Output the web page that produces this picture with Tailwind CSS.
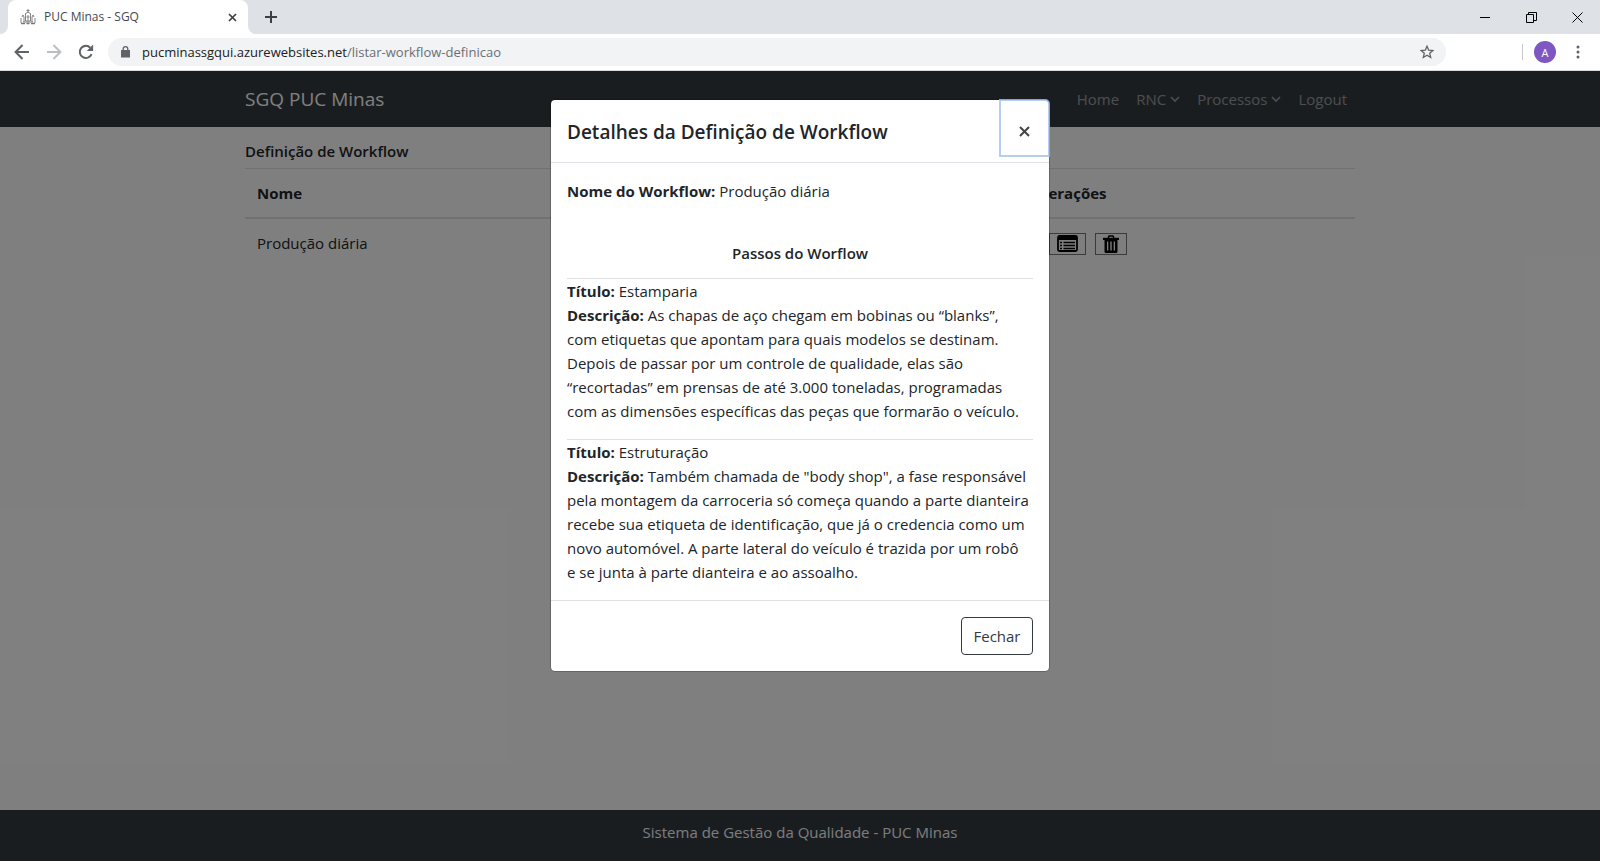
<!DOCTYPE html>
<html lang="pt-BR">
<head>
<meta charset="utf-8">
<title>PUC Minas - SGQ</title>
<script src="https://cdn.jsdelivr.net/npm/@tailwindcss/browser@4"></script>
</head>
<body class="flex h-screen flex-col overflow-hidden bg-white font-['Open_Sans','Noto_Sans',sans-serif] text-[15px] leading-6 text-[#212529]">

<!-- Browser window -->
<header class="shrink-0 border-b border-[#d5dadd] text-[13px]">
  <div class="flex h-[34px] items-center bg-[#dee1e6]">
    <div class="flex h-full w-2 bg-white"><span class="h-full w-full rounded-br-lg bg-[#dee1e6]"></span></div>
    <div class="flex h-full w-60 items-center rounded-t-lg bg-white pr-2 pl-3 text-[12px] text-[#45494d]">
      <svg class="size-4 shrink-0 text-[#777]" viewBox="0 0 16 16" fill="none" stroke="currentColor"><path d="M8 0v4M6.500 1.500h3M5 5l3-2 3 2M5.500 5v7h5V5M8 6v6M6.500 8h3M3 13h10M2 8l1-2 1 2v5M12 13V8l1-2 1 2M1 9v5M15 9v5" stroke-width=".9"/><path d="M1 14.500h4M6.500 14.500h3M11 14.500h4" stroke-width="1.500"/></svg>
      <span class="ml-2 flex-1">PUC Minas - SGQ</span>
      <button aria-label="Fechar guia" class="flex size-4 items-center justify-center text-[#3c4043]"><svg class="size-[9px]" viewBox="0 0 9 9" stroke="currentColor" stroke-width="1.700"><path d="M1 1l7 7M8 1L1 8"/></svg></button>
    </div>
    <div class="flex h-full w-2 bg-white"><span class="h-full w-full rounded-bl-lg bg-[#dee1e6]"></span></div>
    <button aria-label="Nova guia" class="ml-2 text-[#3c4043]"><svg class="size-[14px]" viewBox="0 0 14 14" stroke="currentColor" stroke-width="2"><path d="M7 1v12M1 7h12"/></svg></button>
    <div class="ml-auto flex h-7 items-center text-black">
      <button aria-label="Minimizar" class="flex w-[46px] justify-center"><svg class="size-[11px]" viewBox="0 0 11 11" stroke="currentColor"><path d="M0 5.500h10"/></svg></button>
      <button aria-label="Restaurar" class="flex w-[46px] justify-center"><svg class="size-[11px]" viewBox="0 0 11 11" fill="none" stroke="currentColor"><path d="M.5 2.500h7v8h-7zM2.500 2.500v-2h8v8h-3"/></svg></button>
      <button aria-label="Fechar janela" class="flex w-[46px] justify-center"><svg class="size-[11px]" viewBox="0 0 11 11" stroke="currentColor"><path d="M.5.5l10 10M10.500.5l-10 10"/></svg></button>
    </div>
  </div>
  <div class="flex h-9 items-center pr-4 pl-[14px] text-[#5f6368]">
    <button aria-label="Voltar" class="mr-4"><svg class="size-4" viewBox="0 0 15 15" fill="none" stroke="currentColor" stroke-width="1.900"><path d="M14 7.500H2M8 1L1.500 7.500 8 14"/></svg></button>
    <button aria-label="Avançar" class="mr-4 text-[#bcbfc2]"><svg class="size-4" viewBox="0 0 15 15" fill="none" stroke="currentColor" stroke-width="1.900"><path d="M1 7.500h12M7 1l6.500 6.500L7 14"/></svg></button>
    <button aria-label="Recarregar" class="mr-[14px]"><svg class="size-4" viewBox="0 0 15 15" fill="none"><path d="M12.700 9.500a5.700 5.700 0 1 1-1.200-6" stroke="currentColor" stroke-width="1.900"/><path d="M14.200.5v6h-6z" fill="currentColor"/></svg></button>
    <div class="flex h-7 flex-1 items-center rounded-full bg-[#f1f3f4] pr-3 pl-[13px]">
      <svg class="h-3 w-[9px]" viewBox="0 0 9 12"><path d="M0 4h9v7.500H0z" fill="currentColor"/><path d="M2.200 5V3a2.300 2.300 0 0 1 4.600 0v2" fill="none" stroke="currentColor" stroke-width="1.300"/></svg>
      <a href="#" class="ml-3 flex-1 whitespace-nowrap text-[#202124]">pucminassgqui.azurewebsites.net<span class="text-[#6b6f74]">/listar-workflow-definicao</span></a>
      <button aria-label="Favoritar"><svg class="size-[14px]" viewBox="0 0 14 14" fill="none" stroke="currentColor" stroke-width="1.300"><path d="M7 1.200l1.700 4 4.200.3-3.200 2.800 1 4.200L7 10.300l-3.700 2.200 1-4.200L1.100 5.500l4.200-.3z"/></svg></button>
    </div>
    <span class="ml-[76px] h-4 w-px bg-[#c6c9cc]"></span>
    <button class="ml-[11px] size-[22px] rounded-full bg-[#7e57c2] text-[11px] leading-none text-white">A</button>
    <button aria-label="Menu" class="ml-5 mr-1"><svg class="h-[14px] w-1" viewBox="0 0 4 14" fill="currentColor"><circle cx="2" cy="2" r="1.500"/><circle cx="2" cy="7" r="1.500"/><circle cx="2" cy="12" r="1.500"/></svg></button>
  </div>
</header>

<!-- Site -->
<div class="relative flex min-h-0 flex-1 flex-col">
  <nav class="bg-[#343a40]">
    <div class="mx-auto flex h-14 max-w-[1110px] items-center justify-between">
      <a href="#" class="text-[19px] leading-8 text-white">SGQ PUC Minas</a>
      <div class="flex gap-[17px] pr-2 text-white/50">
        <a href="#">Home</a>
        <a href="#" class="flex items-center gap-1">RNC <svg class="mt-px h-[7px] w-[10px]" viewBox="0 0 10 7" fill="none" stroke="currentColor" stroke-width="1.600"><path d="M1 1l4 4 4-4"/></svg></a>
        <a href="#" class="flex items-center gap-1">Processos <svg class="mt-px h-[7px] w-[10px]" viewBox="0 0 10 7" fill="none" stroke="currentColor" stroke-width="1.600"><path d="M1 1l4 4 4-4"/></svg></a>
        <a href="#">Logout</a>
      </div>
    </div>
  </nav>
  <main class="mx-auto w-full max-w-[1110px] flex-1 pt-3">
    <h1 class="pb-[5px] font-semibold">Definição de Workflow</h1>
    <table class="w-full border-t border-[#dee2e6] text-left">
      <thead><tr class="border-b-2 border-[#dee2e6]"><th class="w-[770px] p-3 font-bold">Nome</th><th class="p-3 font-bold">Operações</th></tr></thead>
      <tbody><tr><td class="p-3">Produção diária</td><td class="px-3">
        <div class="flex gap-[9px] pt-px pl-[22px] text-black">
          <button aria-label="Detalhes" class="flex h-[22px] w-[37px] items-center justify-center border border-[#777] bg-[#efefef]/10"><svg class="h-[17px] w-[21px]" viewBox="0 0 21 17"><rect x="1" y="1" width="19" height="15" rx="1.500" fill="none" stroke="currentColor" stroke-width="1.800"/><path d="M1 1h19v4H1z" fill="currentColor"/><path d="M3 7.500h2M6.500 7.500H18M3 10.500h2M6.500 10.500H18M3 13.500h2M6.500 13.500H18" stroke="currentColor" stroke-width="1.500"/></svg></button>
          <button aria-label="Excluir" class="flex h-[22px] w-8 items-center justify-center border border-[#777] bg-[#efefef]/10"><svg class="h-[18px] w-4" viewBox="0 0 16 18"><path d="M0 2.800h16v2.200H0z" fill="currentColor"/><path d="M5 3.500L6 1h4l1 2.500" fill="none" stroke="currentColor" stroke-width="1.500"/><path fill-rule="evenodd" fill="currentColor" d="M1.500 5h13v11.500q0 1.500-1.500 1.500H3q-1.500 0-1.500-1.500zM4 6.500v9h1.300v-9zM7.300 6.500v9h1.400v-9zM10.700 6.500v9H12v-9z"/></svg></button>
        </div></td></tr></tbody>
    </table>
  </main>
  <footer class="h-[51px] bg-[#343a40] pt-[10px] text-center text-[#f8f9fa]">Sistema de Gestão da Qualidade - PUC Minas</footer>

  <!-- Modal dialog over the dimmed page -->
  <div class="absolute inset-0 bg-black/50 pt-[29px]">
    <section role="dialog" aria-labelledby="titulo" class="mx-auto w-[498px] rounded-[4px] bg-white outline outline-black/20">
      <div class="flex items-start justify-between border-b border-[#dee2e6] pb-[6px] pl-4">
        <h2 id="titulo" class="pt-[17px] text-[19px] font-semibold leading-[30px]">Detalhes da Definição de Workflow</h2>
        <button aria-label="Fechar" class="flex h-14 w-[49px] items-center justify-center rounded-tr-[4px] text-[#444] outline-2 -outline-offset-1 outline-[#b5cdf0]"><svg class="mt-[6px] size-[11px]" viewBox="0 0 11 11" stroke="currentColor" stroke-width="2"><path d="M1 1l9 9M10 1l-9 9"/></svg></button>
      </div>
      <div class="p-4">
        <p><b>Nome do Workflow:</b> Produção diária</p>
        <h3 class="pt-[38px] pb-[13px] text-center font-semibold">Passos do Worflow</h3>
        <div class="border-t border-[#dee2e6] pb-4">
          <p><b>Título:</b> Estamparia</p>
          <p><b>Descrição:</b> As chapas de aço chegam em bobinas ou “blanks”,<br>com etiquetas que apontam para quais modelos se destinam.<br>Depois de passar por um controle de qualidade, elas são<br>“recortadas” em prensas de até 3.000 toneladas, programadas<br>com as dimensões específicas das peças que formarão o veículo.</p>
        </div>
        <div class="border-t border-[#dee2e6]">
          <p><b>Título:</b> Estruturação</p>
          <p><b>Descrição:</b> Também chamada de "body shop", a fase responsável<br>pela montagem da carroceria só começa quando a parte dianteira<br>recebe sua etiqueta de identificação, que já o credencia como um<br>novo automóvel. A parte lateral do veículo é trazida por um robô<br>e se junta à parte dianteira e ao assoalho.</p>
        </div>
      </div>
      <div class="flex justify-end border-t border-[#dee2e6] p-4">
        <button class="h-[38px] w-[72px] rounded-[4px] border border-[#343a40] text-[#343a40]">Fechar</button>
      </div>
    </section>
  </div>
</div>
</body>
</html>
